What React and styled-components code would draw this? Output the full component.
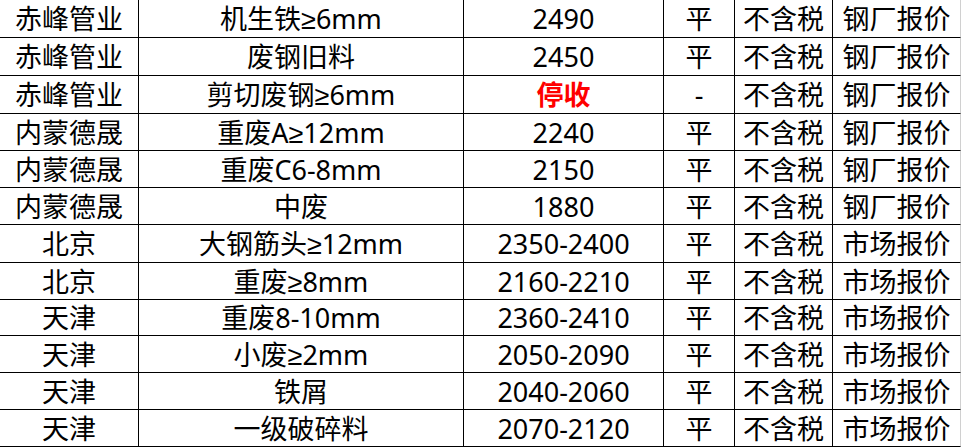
import styled, { createGlobalStyle } from "styled-components";

const GlobalStyle = createGlobalStyle`
  html, body {
    margin: 0;
    padding: 0;
    background: #ffffff;
  }
  body {
    font-family: "Noto Sans", "Liberation Sans", "Noto Sans CJK SC", sans-serif;
  }
`;

const rows = [
  ["赤峰管业", "机生铁≥6mm", "2490", "平", "不含税", "钢厂报价", 38],
  ["赤峰管业", "废钢旧料", "2450", "平", "不含税", "钢厂报价", 38],
  ["赤峰管业", "剪切废钢≥6mm", "停收", "-", "不含税", "钢厂报价", 38],
  ["内蒙德晟", "重废A≥12mm", "2240", "平", "不含税", "钢厂报价", 37],
  ["内蒙德晟", "重废C6-8mm", "2150", "平", "不含税", "钢厂报价", 37],
  ["内蒙德晟", "中废", "1880", "平", "不含税", "钢厂报价", 37],
  ["北京", "大钢筋头≥12mm", "2350-2400", "平", "不含税", "市场报价", 38],
  ["北京", "重废≥8mm", "2160-2210", "平", "不含税", "市场报价", 37],
  ["天津", "重废8-10mm", "2360-2410", "平", "不含税", "市场报价", 36],
  ["天津", "小废≥2mm", "2050-2090", "平", "不含税", "市场报价", 37],
  ["天津", "铁屑", "2040-2060", "平", "不含税", "市场报价", 37],
  ["天津", "一级破碎料", "2070-2120", "平", "不含税", "市场报价", 37],
];

export default function App() {
  return (
    <>
      <GlobalStyle />
      <Sheet>
        {rows.map((r, i) => (
          <Row key={i} $h={r[6]}>
            <Cell>{r[0]}</Cell>
            <Cell>{r[1]}</Cell>
            <Cell>{r[2] === "停收" ? <Stop>{r[2]}</Stop> : r[2]}</Cell>
            <Cell>{r[3]}</Cell>
            <Cell>{r[4]}</Cell>
            <Cell $last>{r[5]}</Cell>
          </Row>
        ))}
      </Sheet>
    </>
  );
}

// -------------css
const Sheet = styled.div`
  width: 961px;
  display: flex;
  flex-direction: column;
`;

const Row = styled.div`
  display: grid;
  grid-template-columns: 139px 325px 200px 71px 98px 128px;
  height: ${(p) => p.$h}px;
`;

const Cell = styled.div`
  box-sizing: border-box;
  display: flex;
  align-items: center;
  justify-content: center;
  border-bottom: 1px solid #000000;
  border-right: 1px solid ${(p) => (p.$last ? "#d0d0d0" : "#000000")};
  font-size: 27px;
  line-height: 1;
  color: #000000;
  white-space: nowrap;
  overflow: hidden;
`;

const Stop = styled.span`
  color: #ff0000;
  font-weight: 700;
`;
